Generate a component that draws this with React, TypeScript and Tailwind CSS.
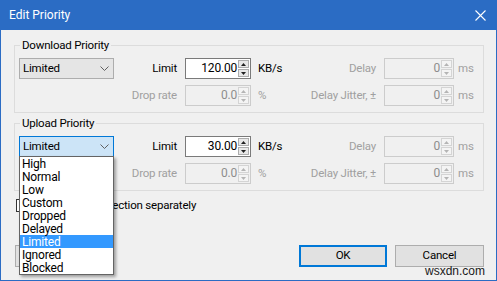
import { useState } from "react"

const font = { fontFamily: 'Roboto, "Segoe UI", "Liberation Sans", sans-serif' }

function Chevron({ color = "#606060" }: { color?: string }) {
  return (
    <svg width="9" height="5" viewBox="0 0 9 5" className="shrink-0">
      <path d="M0.5 0.5 L4.5 4.5 L8.5 0.5" fill="none" stroke={color} strokeWidth="1" />
    </svg>
  )
}

function Arrows({ disabled }: { disabled?: boolean }) {
  const fill = disabled ? "#b4b4b4" : "#202020"
  return (
    <div className="flex w-[12px] flex-col gap-[1px] py-[1px] pr-[1px]">
      <div className={`flex flex-1 items-center justify-center border ${disabled ? "border-[#d4d4d4] bg-[#f4f4f4]" : "border-[#acacac] bg-[#e8e8e8]"}`}>
        <svg width="5" height="3" viewBox="0 0 5 3"><path d="M0 3 L2.5 0 L5 3 Z" fill={fill} /></svg>
      </div>
      <div className={`flex flex-1 items-center justify-center border ${disabled ? "border-[#d4d4d4] bg-[#f4f4f4]" : "border-[#acacac] bg-[#e8e8e8]"}`}>
        <svg width="5" height="3" viewBox="0 0 5 3"><path d="M0 0 L5 0 L2.5 3 Z" fill={fill} /></svg>
      </div>
    </div>
  )
}

function Spin({ value, width, disabled }: { value: string; width: string; disabled?: boolean }) {
  return (
    <div className={`flex h-[21px] ${width} border ${disabled ? "border-[#cccccc] bg-[#f0f0f0] text-[#8d8d8d]" : "border-[#7a7a7a] bg-white text-black"}`}>
      <div className="flex-1 pr-[1px] text-right text-[12px] leading-[19px]">{value}</div>
      <Arrows disabled={disabled} />
    </div>
  )
}

function Combo({ focused }: { focused?: boolean }) {
  return (
    <div className={`flex h-[21px] w-[95px] items-center justify-between border pl-[3px] pr-[4px] ${focused ? "border-[#0078d7] bg-[#cce4f7]" : "border-[#adadad] bg-[#e5e5e5]"}`}>
      <span className="leading-[19px]">Limited</span>
      <Chevron />
    </div>
  )
}

function PriorityGroup({ title, limit, open }: { title: string; limit: string; open?: boolean }) {
  const items = ["High", "Normal", "Low", "Custom", "Dropped", "Delayed", "Limited", "Ignored", "Blocked"]
  return (
    <fieldset className="ml-[13px] w-[470px] border border-[#dcdcdc] px-[4px] pb-[6px] pt-[6px]">
      <legend className="ml-[1px] px-[2px] leading-[14px]">{title}</legend>
      <div className="flex h-[21px] items-center">
        <div className="relative">
          <Combo focused={open} />
          {open && (
            <div className="absolute left-0 top-[20px] z-10 w-[95px] border border-[#646464] bg-white shadow-[2px_2px_3px_rgba(0,0,0,0.35)]">
              {items.map(item => (
                <div
                  key={item}
                  className={`h-[13px] pl-[2px] text-[12px] leading-[14px] ${item === "Limited" ? "bg-[#3399ff] text-white" : "text-black"}`}
                >
                  {item}
                </div>
              ))}
            </div>
          )}
        </div>
        <div className="w-[63px] text-right">Limit</div>
        <div className="ml-[8px]"><Spin value={limit} width="w-[66px]" /></div>
        <div className="w-[50px] pl-[7px]">KB/s</div>
        <div className="w-[75px] whitespace-nowrap text-right text-[#a0a0a0]">Delay</div>
        <div className="ml-[8px]"><Spin value="0" width="w-[70px]" disabled /></div>
        <div className="pl-[4px] text-[#a0a0a0]">ms</div>
      </div>
      <div className="mt-[6px] flex h-[21px] items-center">
        <div className="w-[95px]" />
        <div className="w-[63px] whitespace-nowrap text-right text-[#a0a0a0]">Drop rate</div>
        <div className="ml-[8px]"><Spin value="0.0" width="w-[66px]" disabled /></div>
        <div className="w-[50px] pl-[7px] text-[#a0a0a0]">%</div>
        <div className="w-[75px] whitespace-nowrap text-right text-[#a0a0a0]">Delay Jitter, ±</div>
        <div className="ml-[8px]"><Spin value="0" width="w-[70px]" disabled /></div>
        <div className="pl-[4px] text-[#a0a0a0]">ms</div>
      </div>
    </fieldset>
  )
}

export default function App() {
  const [checked] = useState(false)
  return (
    <div className="relative flex h-[281px] w-[497px] flex-col border border-t-0 border-[#2b6cc4] bg-[#f0f0f0] text-[11.5px] tracking-[-0.2px] text-black" style={font}>
      <div className="flex h-[30px] shrink-0 items-center justify-between bg-[#2b6cc4] pl-[8px] pr-[10px] text-[12px] tracking-normal text-white">
        <span className="leading-[16px]">Edit Priority</span>
        <svg width="11" height="11" viewBox="0 0 11 11">
          <path d="M0.5 0.5 L10.5 10.5 M10.5 0.5 L0.5 10.5" stroke="white" strokeWidth="1.1" />
        </svg>
      </div>

      <div className="flex flex-1 flex-col pt-[8px]">
        <PriorityGroup title="Download Priority" limit="120.00" />
        <div className="mt-[3px]">
          <PriorityGroup title="Upload Priority" limit="30.00" open />
        </div>

        <div className="ml-[15px] mt-[7px] flex items-center gap-[5px]">
          <div className={`h-[13px] w-[13px] border border-[#333333] ${checked ? "bg-[#0078d7]" : "bg-white"}`} />
          <span className="leading-[14px]">Limit each connection separately</span>
        </div>

        <div className="mt-auto flex items-center pb-[13px] pl-[14px] pr-[12px]">
          <button className="h-[22px] w-[88px] border border-[#adadad] bg-[#e1e1e1]" />
          <div className="flex-1" />
          <button className="h-[22px] w-[88px] border-2 border-[#0078d7] bg-[#e1e1e1]">OK</button>
          <button className="ml-[8px] h-[22px] w-[89px] border border-[#adadad] bg-[#e1e1e1]">Cancel</button>
        </div>
      </div>

      <span className="absolute bottom-[3px] right-[11px] text-[12px] leading-[12px] tracking-normal text-[#1a1a1a]" style={{ fontFamily: '"Liberation Sans", sans-serif' }}>
        wsxdn.com
      </span>
    </div>
  )
}
